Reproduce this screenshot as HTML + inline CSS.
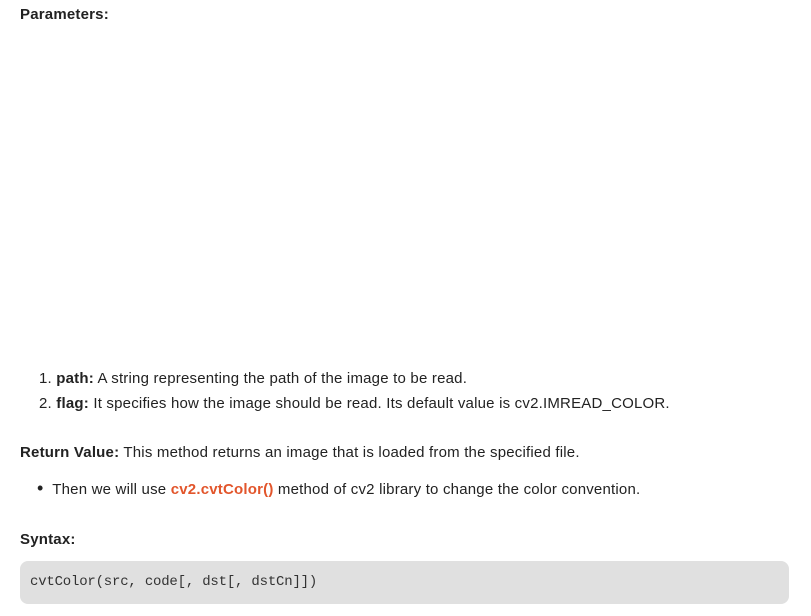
<!DOCTYPE html>
<html><head><style>
body{margin:0;width:811px;height:616px;background:#fff;font-family:"Liberation Sans",sans-serif;color:#222;font-size:15px;position:relative;overflow:hidden}
.t{position:absolute;white-space:nowrap;line-height:20px;letter-spacing:0.2px}
b{font-weight:bold}
.code{position:absolute;left:20px;top:561px;width:769px;height:43px;background:#e0e0e0;border-radius:8px}
.code span{position:absolute;left:10px;top:13px;font-family:"Liberation Mono",monospace;font-size:14px;color:#333;letter-spacing:-0.2px}
</style></head><body>
<div class="t" style="left:20px;top:5px"><b>Parameters:</b></div>
<div class="t" style="left:39px;top:369px">1. <b>path:</b> A string representing the path of the image to be read.</div>
<div class="t" style="left:39px;top:394px">2. <b>flag:</b> It specifies how the image should be read. Its default value is cv2.IMREAD_COLOR.</div>
<div class="t" style="left:20px;top:443px"><b>Return Value:</b> This method returns an image that is loaded from the specified file.</div>
<div class="t" style="left:37px;top:479px"><span style="font-size:18px;line-height:18px">•</span>&nbsp;&nbsp;Then we will use <b style="color:#e2552b">cv2.cvtColor()</b> method of cv2 library to change the color convention.</div>
<div class="t" style="left:20px;top:530px"><b>Syntax:</b></div>
<div class="code"><span>cvtColor(src, code[, dst[, dstCn]])</span></div>
</body></html>
